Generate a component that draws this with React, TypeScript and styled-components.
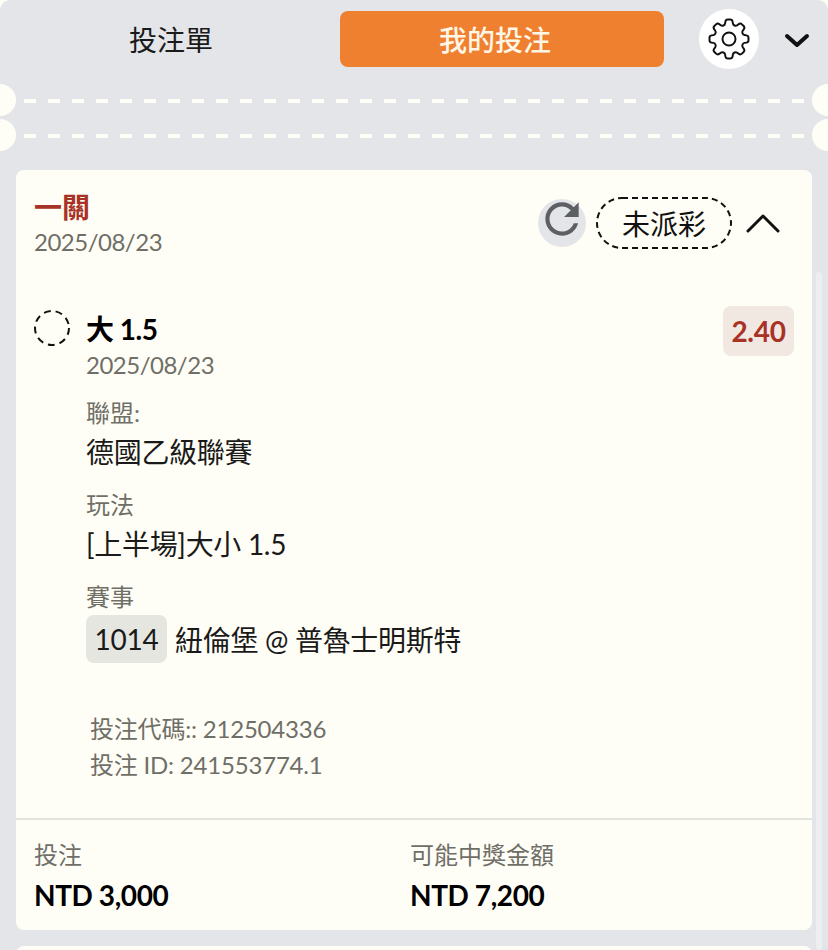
import React from 'react'
import styled, { createGlobalStyle } from 'styled-components'
import { HiOutlineCog8Tooth } from 'react-icons/hi2'

const GlobalStyle = createGlobalStyle`
  html, body {
    margin: 0;
    padding: 0;
    background: #fffef6;
  }
  body {
    font-family: Lato, 'Noto Sans CJK TC', sans-serif;
    color: #111;
  }
`

const Page = styled.div`
  position: relative;
  width: 828px;
  height: 950px;
  overflow: hidden;
  background: #e3e5e8;
  border-radius: 10px 10px 0 0;
`

const TopBar = styled.div`
  display: flex;
  align-items: center;
  height: 78px;
  padding-left: 9px;
`

const Tab = styled.div<{ $active?: boolean }>`
  display: flex;
  align-items: center;
  justify-content: center;
  box-sizing: border-box;
  width: 324px;
  height: 56px;
  border-radius: 8px;
  font-size: 28px;
  font-weight: ${({ $active }) => ($active ? 500 : 400)};
  color: ${({ $active }) => ($active ? '#fff6e6' : '#1a1a1a')};
  background: ${({ $active }) => ($active ? '#ef8030' : 'transparent')};
  margin-left: ${({ $active }) => ($active ? '7px' : '0')};
  padding-right: ${({ $active }) => ($active ? '14px' : '0')};
`

const GearButton = styled.div`
  display: flex;
  align-items: center;
  justify-content: center;
  width: 60px;
  height: 60px;
  margin-left: 35px;
  border-radius: 50%;
  background: #fff;
  color: #111;
`

const DownIcon = styled.svg`
  width: 26px;
  height: 16px;
  margin: 3px 0 0 25px;
`

const Perforation = styled.div<{ $first?: boolean }>`
  display: flex;
  align-items: center;
  height: 32px;
  margin: ${({ $first }) => ($first ? '6px' : '0')} -16px 3px;
`

const Notch = styled.div`
  flex: none;
  width: 32px;
  height: 32px;
  border-radius: 50%;
  background: #fffef6;
`

const DashLine = styled.div`
  flex: 1;
  height: 4px;
  margin: 1px 8px 0;
  background: repeating-linear-gradient(90deg, #fffef6 0 12px, transparent 12px 24px);
`

const Card = styled.div`
  width: 796px;
  height: 760px;
  margin: 19px 0 16px 16px;
  border-radius: 8px;
  background: #fffef6;
  display: flex;
  flex-direction: column;
`

const CardHeader = styled.div`
  display: flex;
  justify-content: space-between;
  padding: 18px 32px 0 18px;
`

const ParlayTitle = styled.div`
  font-size: 28px;
  font-weight: 700;
  line-height: 38px;
  color: #a93226;
`

const DateText = styled.div`
  font-size: 24px;
  line-height: 32px;
  letter-spacing: -0.5px;
  color: #6f6f68;
`

const HeaderActions = styled.div`
  display: flex;
  align-items: center;
  height: 52px;
  margin-top: 9px;
`

const RefreshButton = styled.div`
  display: flex;
  align-items: center;
  justify-content: center;
  width: 48px;
  height: 48px;
  border-radius: 50%;
  background: #e3e5e8;
`

const RefreshIcon = styled.svg`
  flex: none;
  width: 50px;
  height: 50px;
  margin-bottom: 8px;
  fill: #5c5f63;
`

const StatusPill = styled.div`
  position: relative;
  display: flex;
  align-items: center;
  justify-content: center;
  width: 136px;
  height: 52px;
  margin-left: 10px;
  font-size: 28px;
`

const PillOutline = styled.svg`
  position: absolute;
  inset: 0;
  width: 100%;
  height: 100%;
`

const UpIcon = styled.svg`
  width: 34px;
  height: 20px;
  margin-left: 14px;
`

const Selection = styled.div`
  display: flex;
  padding: 51px 18px 0;
`

const StatusDot = styled.svg`
  flex: none;
  width: 36px;
  height: 36px;
  margin: 1px 16px 0 0;
`

const SelectionBody = styled.div`
  flex: 1;
`

const SelectionName = styled.div`
  font-size: 28px;
  font-weight: 700;
  line-height: 40px;
  letter-spacing: -0.5px;
  color: #000;
`

const FieldLabel = styled.div`
  font-size: 24px;
  line-height: 32px;
  margin-top: 16px;
  color: #6f6f68;
`

const FieldValue = styled.div`
  font-size: 28px;
  line-height: 46px;
  margin-bottom: -2px;
  letter-spacing: -0.3px;
  color: #1a1a1a;
`

const MatchRow = styled.div`
  display: flex;
  align-items: center;
  gap: 8px;
  font-size: 28px;
  letter-spacing: -0.3px;
  height: 48px;
  margin-top: 2px;
  color: #1a1a1a;
`

const MatchCode = styled.span`
  display: flex;
  align-items: center;
  justify-content: center;
  width: 81px;
  height: 48px;
  border-radius: 8px;
  background: #e6e6e0;
`

const Odds = styled.div`
  flex: none;
  display: flex;
  align-items: center;
  justify-content: center;
  width: 71px;
  height: 50px;
  margin-top: -3px;
  border-radius: 8px;
  background: #f2e8e2;
  font-size: 28px;
  font-weight: 700;
  letter-spacing: -0.3px;
  color: #a93226;
`

const BetMeta = styled.div`
  padding: 48px 0 0 74px;
  font-size: 24px;
  line-height: 36px;
  letter-spacing: -0.2px;
  color: #6f6f68;
`

const CardFooter = styled.div`
  display: flex;
  margin-top: auto;
  height: 112px;
  box-sizing: border-box;
  padding: 19px 18px 0;
  border-top: 2px solid #e3e3dd;
`

const FooterCell = styled.div`
  width: 376px;
`

const FooterLabel = styled.div`
  font-size: 24px;
  line-height: 32px;
  color: #6f6f68;
`

const FooterValue = styled.div`
  font-size: 28px;
  font-weight: 700;
  line-height: 48px;
  letter-spacing: -0.4px;
  color: #000;
`

const NextCard = styled.div`
  height: 20px;
  margin-left: 16px;
  width: 796px;
  border-radius: 8px 8px 0 0;
  background: #fffef6;
`

const ScrollThumb = styled.div`
  position: absolute;
  top: 272px;
  right: 6px;
  bottom: 0;
  width: 6px;
  border-radius: 3px;
  background: #eceef0;
`

export default function App() {
  return (
    <Page>
      <GlobalStyle />
      <TopBar>
        <Tab>投注單</Tab>
        <Tab $active>我的投注</Tab>
        <GearButton>
          <HiOutlineCog8Tooth size={52} strokeWidth={0.9} />
        </GearButton>
        <DownIcon viewBox="0 0 26 16" fill="none" stroke="#111" strokeWidth="4" strokeLinecap="round" strokeLinejoin="round">
          <path d="M3 3l10 9 10-9" />
        </DownIcon>
      </TopBar>
      <Perforation $first>
        <Notch />
        <DashLine />
        <Notch />
      </Perforation>
      <Perforation>
        <Notch />
        <DashLine />
        <Notch />
      </Perforation>
      <Card>
        <CardHeader>
          <div>
            <ParlayTitle>一關</ParlayTitle>
            <DateText>2025/08/23</DateText>
          </div>
          <HeaderActions>
            <RefreshButton>
              <RefreshIcon viewBox="0 0 24 24">
                <path d="M17.65 6.35C16.2 4.9 14.21 4 12 4c-4.42 0-7.99 3.58-7.99 8s3.57 8 7.99 8c3.73 0 6.84-2.55 7.73-6h-2.08c-.82 2.33-3.04 4-5.65 4-3.31 0-6-2.69-6-6s2.69-6 6-6c1.66 0 3.14.69 4.22 1.78L13 11h7V4l-2.35 2.35z" />
              </RefreshIcon>
            </RefreshButton>
            <StatusPill>
              <PillOutline viewBox="0 0 136 52" fill="none">
                <rect x="1" y="1" width="134" height="50" rx="25" stroke="#111" strokeWidth="2" strokeDasharray="6 4" />
              </PillOutline>
              未派彩
            </StatusPill>
            <UpIcon viewBox="0 0 34 20" fill="none" stroke="#111" strokeWidth="3" strokeLinecap="round" strokeLinejoin="round">
              <path d="M2 18L17 3l15 15" />
            </UpIcon>
          </HeaderActions>
        </CardHeader>
        <Selection>
          <StatusDot viewBox="0 0 36 36" fill="none">
            <circle cx="18" cy="18" r="17" stroke="#111" strokeWidth="2" strokeDasharray="6.9 5" />
          </StatusDot>
          <SelectionBody>
            <SelectionName>大 1.5</SelectionName>
            <DateText>2025/08/23</DateText>
            <FieldLabel>聯盟:</FieldLabel>
            <FieldValue>德國乙級聯賽</FieldValue>
            <FieldLabel>玩法</FieldLabel>
            <FieldValue>[上半場]大小 1.5</FieldValue>
            <FieldLabel>賽事</FieldLabel>
            <MatchRow>
              <MatchCode>1014</MatchCode>
              紐倫堡 @ 普魯士明斯特
            </MatchRow>
          </SelectionBody>
          <Odds>2.40</Odds>
        </Selection>
        <BetMeta>
          <div>投注代碼:: 212504336</div>
          <div>投注 ID: 241553774.1</div>
        </BetMeta>
        <CardFooter>
          <FooterCell>
            <FooterLabel>投注</FooterLabel>
            <FooterValue>NTD 3,000</FooterValue>
          </FooterCell>
          <FooterCell>
            <FooterLabel>可能中獎金額</FooterLabel>
            <FooterValue>NTD 7,200</FooterValue>
          </FooterCell>
        </CardFooter>
      </Card>
      <NextCard />
      <ScrollThumb />
    </Page>
  )
}
